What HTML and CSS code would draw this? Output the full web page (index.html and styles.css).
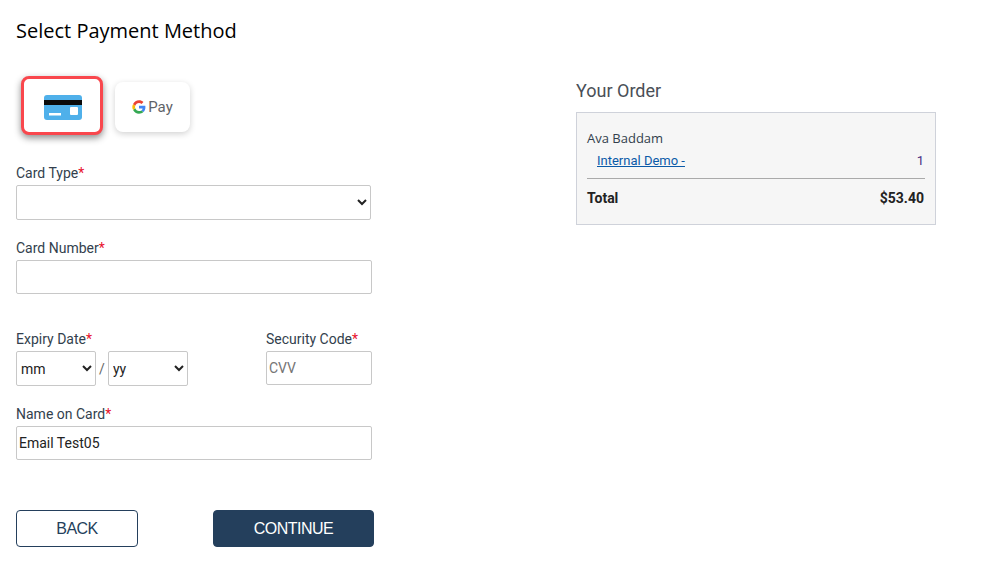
FILE: index.html
```html
<!DOCTYPE html>
<html lang="en">
<head>
    <meta charset="UTF-8">
    <meta name="viewport" content="width=device-width, initial-scale=1.0">
    <title>Select Payment Method</title>
    <link rel="stylesheet" href="styles.css">
</head>
<body>
    <div class="page">
        <div class="payment">
            <h1 class="title">Select Payment Method</h1>

            <!-- Payment method tabs -->
            <div class="methods">
                <div class="method method-active">
                    <svg width="38" height="25" viewBox="0 0 38 25">
                        <rect x="0" y="0" width="38" height="25" rx="3" fill="#4fb0ea"/>
                        <rect x="0" y="5" width="38" height="5" fill="#0b0b0b"/>
                        <rect x="5" y="18" width="12" height="2.5" fill="#fff"/>
                        <rect x="26" y="12" width="8" height="8" rx="1" fill="#fff"/>
                    </svg>
                </div>
                <div class="method method-gpay">
                    <svg width="14" height="14" viewBox="0 0 48 48">
                        <path fill="#4285f4" d="M46 24.500c0-1.600-.1-3.100-.4-4.500H24v8.900h12.400c-.5 2.900-2.100 5.300-4.600 7l7.300 5.600C43.400 37.500 46 31.600 46 24.500z"/>
                        <path fill="#34a853" d="M24 47c6.200 0 11.400-2 15.100-5.500l-7.300-5.600c-2 1.400-4.700 2.200-7.800 2.200-6 0-11-4-12.800-9.500l-7.500 5.800C7.500 42 15.200 47 24 47z"/>
                        <path fill="#fbbc04" d="M11.200 28.600c-.5-1.400-.7-3-.7-4.600s.3-3.200.7-4.600l-7.500-5.800C2.100 16.700 1 20.200 1 24s1.100 7.300 2.700 10.400l7.500-5.800z"/>
                        <path fill="#ea4335" d="M24 10c3.400 0 6.400 1.200 8.800 3.400l6.500-6.500C35.400 3.300 30.200 1 24 1 15.200 1 7.500 6 3.700 13.600l7.500 5.800C13 14 18 10 24 10z"/>
                    </svg>
                    <span class="gpay-text">Pay</span>
                </div>
            </div>

            <div class="field">
                <label class="field-label">Card Type<span class="req">*</span></label>
                <select class="control control-select card-type"><option></option></select>
            </div>

            <div class="field">
                <label class="field-label">Card Number<span class="req">*</span></label>
                <input class="control control-input" type="text">
            </div>

            <div class="field-row">
                <div class="expiry">
                    <label class="field-label">Expiry Date<span class="req">*</span></label>
                    <div class="expiry-selects">
                        <select class="control control-select month"><option>mm</option></select>
                        <span class="slash">/</span>
                        <select class="control control-select year"><option>yy</option></select>
                    </div>
                </div>
                <div class="security">
                    <label class="field-label">Security Code<span class="req">*</span></label>
                    <input class="control control-input cvv" type="text" placeholder="CVV">
                </div>
            </div>

            <div class="field">
                <label class="field-label">Name on Card<span class="req">*</span></label>
                <input class="control control-input" type="text" value="Email Test05">
            </div>

            <div class="actions">
                <button class="btn btn-back">BACK</button>
                <button class="btn btn-continue">CONTINUE</button>
            </div>
        </div>

        <div class="order">
            <h2 class="order-title">Your Order</h2>
            <div class="order-box">
                <div class="order-name">Ava Baddam</div>
                <div class="order-item">
                    <a class="order-link" href="#">Internal Demo -</a>
                    <span class="order-qty">1</span>
                </div>
                <div class="order-total">
                    <span>Total</span>
                    <span class="order-amount">$53.40</span>
                </div>
            </div>
        </div>
    </div>
</body>
</html>
```

FILE: styles.css
```css
body {
    margin: 0;
    background: #fff;
    font-family: Roboto, sans-serif;
    font-size: 14px;
    color: #333f4d;
}

.page {
    display: flex;
    padding: 0 0 0 16px;
}

.payment {
    width: 358px;
}

.title {
    margin: 0;
    padding-top: 19px;
    font-family: "Open Sans", sans-serif;
    font-size: 20px;
    line-height: 23px;
    font-weight: 400;
    color: #000;
}

.methods {
    display: flex;
    align-items: flex-start;
    gap: 12px;
    margin: 34px 0 0 5px;
}

.method {
    display: flex;
    align-items: center;
    justify-content: center;
    box-sizing: border-box;
    background: #fff;
    border-radius: 8px;
}

.method-active {
    width: 82px;
    height: 59px;
    padding: 4px 0 0 1px;
    border: 3px solid #f9474d;
    box-shadow: 0 3px 7px rgba(0, 0, 0, 0.45);
}

.method-gpay {
    width: 75px;
    height: 50px;
    margin-top: 6px;
    gap: 2px;
    box-shadow: 0 2px 6px rgba(0, 0, 0, 0.18);
}

.gpay-text {
    font-size: 15px;
    color: #5f6368;
}

.field {
    margin-top: 20px;
}

.field-label {
    display: block;
    height: 17px;
    line-height: 17px;
    margin-bottom: 3px;
}

.methods + .field {
    margin-top: 30px;
}

.req {
    color: #e8112d;
}

.control {
    display: block;
    box-sizing: border-box;
    background: #fff;
    border: 1px solid #c8c8c8;
    border-radius: 2px;
    font-family: Roboto, sans-serif;
    font-size: 14px;
    color: #222;
}

.control-input {
    width: 356px;
    height: 34px;
    padding: 0 2px;
    outline: none;
}

.control-select {
    height: 35px;
}

.card-type {
    width: 355px;
}

.field-row {
    display: flex;
    margin-top: 37px;
}

.expiry {
    width: 250px;
}

.expiry-selects {
    display: flex;
    align-items: center;
}

.month,
.year {
    width: 80px;
}

.slash {
    width: 12px;
    text-align: center;
    color: #666;
}

.security {
    width: 106px;
}

.cvv {
    width: 106px;
}

.cvv::placeholder {
    color: #757575;
}

.field-row + .field {
    margin-top: 20px;
}

.actions {
    display: flex;
    margin-top: 50px;
}

.btn {
    height: 37px;
    box-sizing: border-box;
    border-radius: 4px;
    font-family: "Liberation Sans", sans-serif;
    font-size: 16px;
    letter-spacing: -0.5px;
}

.btn-back {
    width: 122px;
    background: #fff;
    border: 1px solid #243f5c;
    color: #243f5c;
}

.btn-continue {
    width: 161px;
    margin-left: 75px;
    background: #243f5c;
    border: 1px solid #243f5c;
    color: #fff;
}

.order {
    width: 360px;
    margin-left: 202px;
}

.order-title {
    margin: 0;
    padding-top: 80px;
    font-size: 18px;
    line-height: 21px;
    font-weight: 400;
    color: #4a4f57;
}

.order-box {
    box-sizing: border-box;
    height: 113px;
    margin-top: 11px;
    padding: 17px 10px 0;
    background: #f6f6f6;
    border: 1px solid #cfd2da;
}

.order-name {
    font-family: "Open Sans", sans-serif;
    font-size: 13px;
    line-height: 17px;
}

.order-item {
    display: flex;
    justify-content: space-between;
    padding: 5px 1px 0 10px;
    line-height: 17px;
    font-size: 13px;
}

.order-link {
    color: #0b5aa8;
}

.order-qty {
    color: #4b2e83;
}

.order-total {
    display: flex;
    justify-content: space-between;
    margin-top: 9px;
    padding-top: 11px;
    border-top: 1px solid #aaa;
    font-weight: 700;
    line-height: 17px;
    color: #222;
}

.order-amount {
    padding-right: 1px;
}
```
